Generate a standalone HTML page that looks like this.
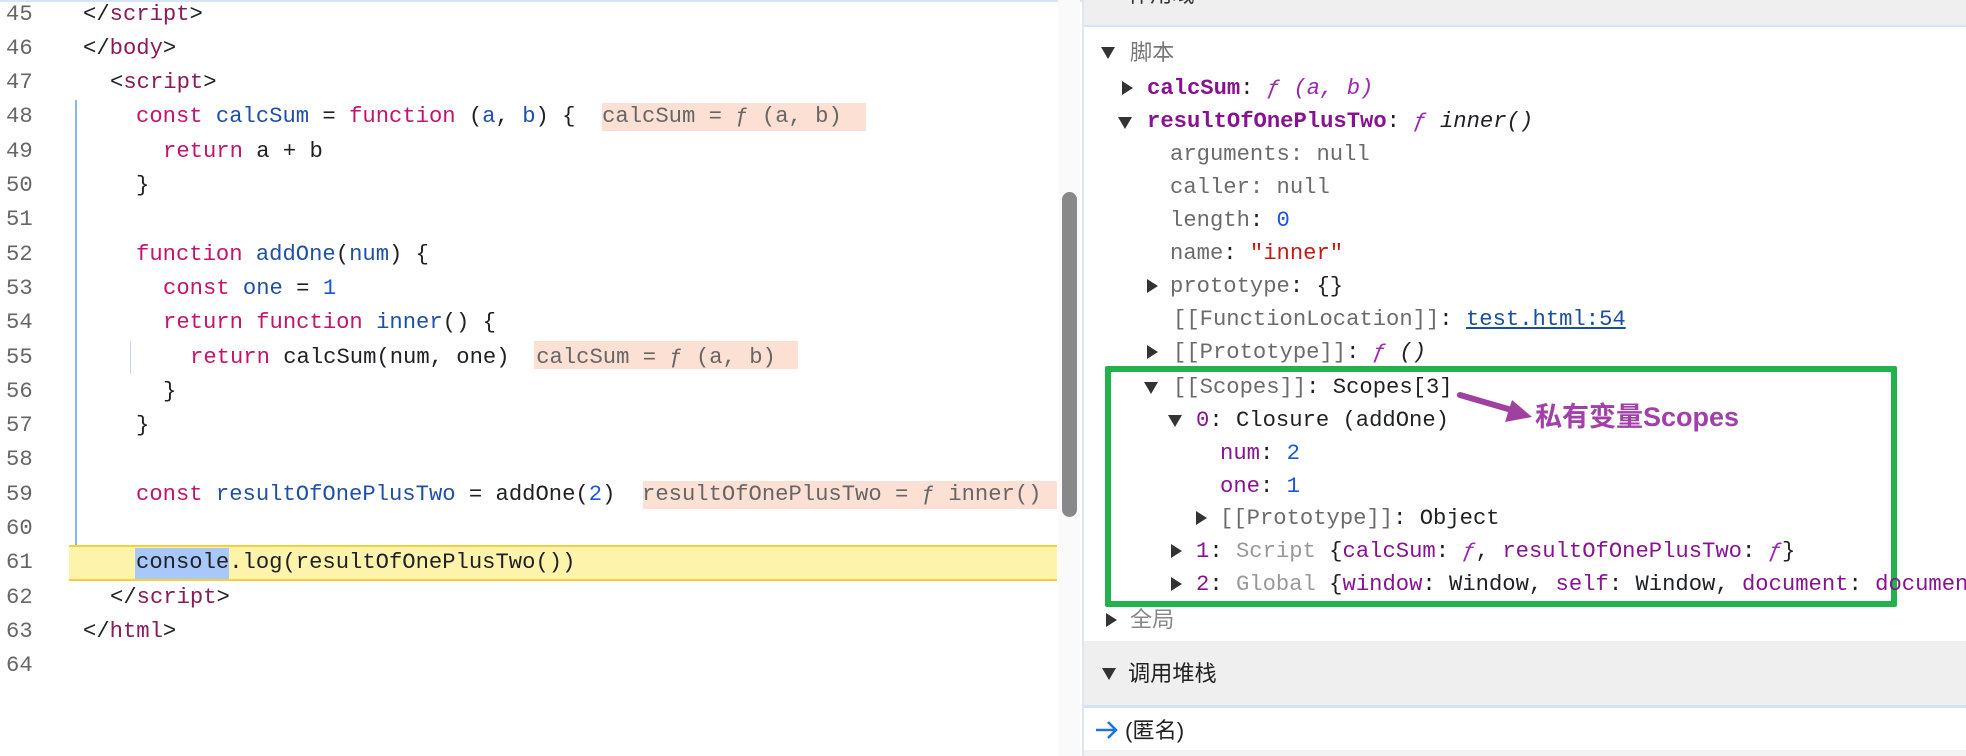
<!DOCTYPE html>
<html><head><meta charset="utf-8"><style>
*{margin:0;padding:0;box-sizing:border-box}
body{width:1966px;height:756px;overflow:hidden;background:#fff;position:relative;font-family:"Liberation Mono","Noto Sans CJK SC",monospace;font-size:22.2px;color:#202124}
.l{position:absolute;height:34px;line-height:34px;white-space:pre}
.n{position:absolute;left:6px;color:#666;height:34px;line-height:34px}
.k{color:#c4136b}.v{color:#1f4fa6}.t{color:#8a1a58}.num{color:#1a56d6}.g{color:#666}
.hint{background:#fde0d4;color:#4a4a4a}
.p{color:#881391}.nl{color:#6b6b6b}.s{color:#c41a16}.f{color:#9c27b0;font-style:italic}
.r{position:absolute;height:33px;line-height:33px;white-space:pre}
.tri{position:absolute;width:0;height:0}
.dn{border-left:7px solid transparent;border-right:7px solid transparent;border-top:12px solid #333}
.rt{border-top:7px solid transparent;border-bottom:7px solid transparent;border-left:11px solid #333}
.cjk{font-family:"Liberation Sans","Noto Sans CJK SC",sans-serif}
</style></head><body>
<div style="position:absolute;left:0;top:0;width:1083px;height:2px;background:#d5e5f5"></div>
<!-- line numbers -->
<div class="n" style="top:-2px">45</div>
<div class="n" style="top:32px">46</div>
<div class="n" style="top:66px">47</div>
<div class="n" style="top:100px">48</div>
<div class="n" style="top:135px">49</div>
<div class="n" style="top:169px">50</div>
<div class="n" style="top:203px">51</div>
<div class="n" style="top:238px">52</div>
<div class="n" style="top:272px">53</div>
<div class="n" style="top:306px">54</div>
<div class="n" style="top:341px">55</div>
<div class="n" style="top:375px">56</div>
<div class="n" style="top:409px">57</div>
<div class="n" style="top:443px">58</div>
<div class="n" style="top:478px">59</div>
<div class="n" style="top:512px">60</div>
<div class="n" style="top:546px">61</div>
<div class="n" style="top:581px">62</div>
<div class="n" style="top:615px">63</div>
<div class="n" style="top:649px">64</div>
<!-- guides -->
<div style="position:absolute;left:75px;top:100px;width:2px;height:446px;background:#8ab4f8"></div>
<div style="position:absolute;left:130px;top:341px;width:1px;height:33px;background:#c6d7f2"></div>
<!-- highlight 61 -->
<div style="position:absolute;left:69px;top:545px;width:988px;height:36px;background:#fdf3aa;border-top:2px solid #f5d03a;border-bottom:2px solid #f5d03a"></div>
<div style="position:absolute;left:135px;top:548px;width:94px;height:31px;background:#a8c7fa"></div>
<!-- hints -->
<div style="position:absolute;left:602px;top:103px;width:264px;height:28px;background:#fde0d4"></div>
<div style="position:absolute;left:534px;top:341px;width:264px;height:28px;background:#fde0d4"></div>
<div style="position:absolute;left:643px;top:481px;width:414px;height:28px;background:#fde0d4"></div>
<!-- code -->
<div class="l" style="left:83px;top:-2px">&lt;/<span class="t">script</span>&gt;</div>
<div class="l" style="left:83px;top:32px">&lt;/<span class="t">body</span>&gt;</div>
<div class="l" style="left:110px;top:66px">&lt;<span class="t">script</span>&gt;</div>
<div class="l" style="left:136px;top:100px"><span class="k">const</span> <span class="v">calcSum</span> = <span class="k">function</span> (<span class="v">a</span>, <span class="v">b</span>) {  <span class="g">calcSum = ƒ (a, b)</span></div>
<div class="l" style="left:163px;top:135px"><span class="k">return</span> a + b</div>
<div class="l" style="left:136px;top:169px">}</div>
<div class="l" style="left:136px;top:238px"><span class="k">function</span> <span class="v">addOne</span>(<span class="v">num</span>) {</div>
<div class="l" style="left:163px;top:272px"><span class="k">const</span> <span class="v">one</span> = <span class="num">1</span></div>
<div class="l" style="left:163px;top:306px"><span class="k">return</span> <span class="k">function</span> <span class="v">inner</span>() {</div>
<div class="l" style="left:190px;top:341px"><span class="k">return</span> calcSum(num, one)  <span class="g">calcSum = ƒ (a, b)</span></div>
<div class="l" style="left:163px;top:375px">}</div>
<div class="l" style="left:136px;top:409px">}</div>
<div class="l" style="left:136px;top:478px"><span class="k">const</span> <span class="v">resultOfOnePlusTwo</span> = addOne(<span class="num">2</span>)  <span class="g">resultOfOnePlusTwo = ƒ inner()</span></div>
<div class="l" style="left:136px;top:546px">console.log(resultOfOnePlusTwo())</div>
<div class="l" style="left:110px;top:581px">&lt;/<span class="t">script</span>&gt;</div>
<div class="l" style="left:83px;top:615px">&lt;/<span class="t">html</span>&gt;</div>
<!-- scrollbar -->
<div style="position:absolute;left:1058px;top:0;width:22px;height:756px;background:#fafafa"></div>
<div style="position:absolute;left:1062px;top:192px;width:15px;height:325px;background:#888;border-radius:8px"></div>
<!-- right panel -->
<div style="position:absolute;left:1082px;top:0;width:2px;height:756px;background:#dfe6f0"></div>
<div style="position:absolute;left:1084px;top:0;width:882px;height:27px;background:#efefef;border-bottom:2px solid #d5e3f5"></div>
<div class="r cjk" style="left:1128px;top:-22px;color:#333">作用域</div>
<div class="tri dn" style="left:1101px;top:47px"></div><div class="r cjk" style="left:1130px;top:36px;color:#777">脚本</div>
<div class="tri rt" style="left:1122px;top:81px"></div><div class="r" style="left:1147px;top:72px"><b class="p">calcSum</b>: <span class="f">ƒ (a, b)</span></div>
<div class="tri dn" style="left:1118px;top:117px"></div><div class="r" style="left:1147px;top:105px"><b class="p">resultOfOnePlusTwo</b>: <span class="f">ƒ</span> <i>inner()</i></div>
<div class="r nl" style="left:1170px;top:138px">arguments: null</div>
<div class="r nl" style="left:1170px;top:171px">caller: null</div>
<div class="r" style="left:1170px;top:204px"><span class="nl">length</span>: <span class="num">0</span></div>
<div class="r" style="left:1170px;top:237px"><span class="nl">name</span>: <span class="s">"inner"</span></div>
<div class="tri rt" style="left:1147px;top:279px"></div><div class="r" style="left:1170px;top:270px"><span class="nl">prototype</span>: {}</div>
<div class="r" style="left:1173px;top:303px"><span class="nl">[[FunctionLocation]]</span>: <span style="color:#1a4fa0;text-decoration:underline">test.html:54</span></div>
<div class="tri rt" style="left:1147px;top:345px"></div><div class="r" style="left:1173px;top:336px"><span class="nl">[[Prototype]]</span>: <span class="f">ƒ</span> <i>()</i></div>
<!-- green box -->
<div style="position:absolute;left:1105px;top:366px;width:792px;height:241px;border:6px solid #23b14d;border-radius:2px"></div>
<div class="tri dn" style="left:1144px;top:382px"></div><div class="r" style="left:1173px;top:371px"><span class="nl">[[Scopes]]</span>: Scopes[3]</div>
<div class="tri dn" style="left:1168px;top:415px"></div><div class="r" style="left:1196px;top:404px"><span class="p">0</span>: Closure (addOne)</div>
<div class="r" style="left:1220px;top:437px"><span class="p">num</span>: <span class="num">2</span></div>
<div class="r" style="left:1220px;top:470px"><span class="p">one</span>: <span class="num">1</span></div>
<div class="tri rt" style="left:1196px;top:511px"></div><div class="r" style="left:1220px;top:502px"><span class="nl">[[Prototype]]</span>: Object</div>
<div class="tri rt" style="left:1171px;top:544px"></div><div class="r" style="left:1196px;top:535px"><span class="p">1</span>: <span class="nl" style="color:#999">Script</span> {<span class="p">calcSum</span>: <span class="f">ƒ</span>, <span class="p">resultOfOnePlusTwo</span>: <span class="f">ƒ</span>}</div>
<div class="tri rt" style="left:1171px;top:577px"></div><div class="r" style="left:1196px;top:568px"><span class="p">2</span>: <span style="color:#999">Global</span> {<span class="p">window</span>: Window, <span class="p">self</span>: Window, <span class="p">document</span>: <span class="p">document</span></div>
<!-- annotation -->
<svg style="position:absolute;left:0;top:0" width="1966" height="756"><line x1="1460" y1="395" x2="1515" y2="411" stroke="#a040a0" stroke-width="6" stroke-linecap="round"/><polygon points="1532,417 1505,422 1512,400" fill="#a040a0"/></svg>
<div class="cjk" style="position:absolute;left:1535px;top:400px;font-size:27px;font-weight:bold;color:#a040a8;line-height:34px">私有变量Scopes</div>
<div class="tri rt" style="left:1106px;top:613px"></div><div class="r cjk" style="left:1130px;top:603px;color:#888">全局</div>
<div style="position:absolute;left:1084px;top:641px;width:882px;height:67px;background:#efefef;border-bottom:3px solid #d5e3f5"></div>
<div class="tri dn" style="left:1102px;top:668px"></div><div class="r cjk" style="left:1128px;top:657px;color:#222">调用堆栈</div>
<svg style="position:absolute;left:1094px;top:718px" width="28" height="24"><path d="M2 12 H22 M14 4 L22 12 L14 20" stroke="#1a73e8" stroke-width="2.5" fill="none"/></svg>
<div class="r cjk" style="left:1125px;top:714px;color:#222">(匿名)</div>
<div style="position:absolute;left:1084px;top:750px;width:882px;height:6px;background:#f3f3f3"></div>
</body></html>
